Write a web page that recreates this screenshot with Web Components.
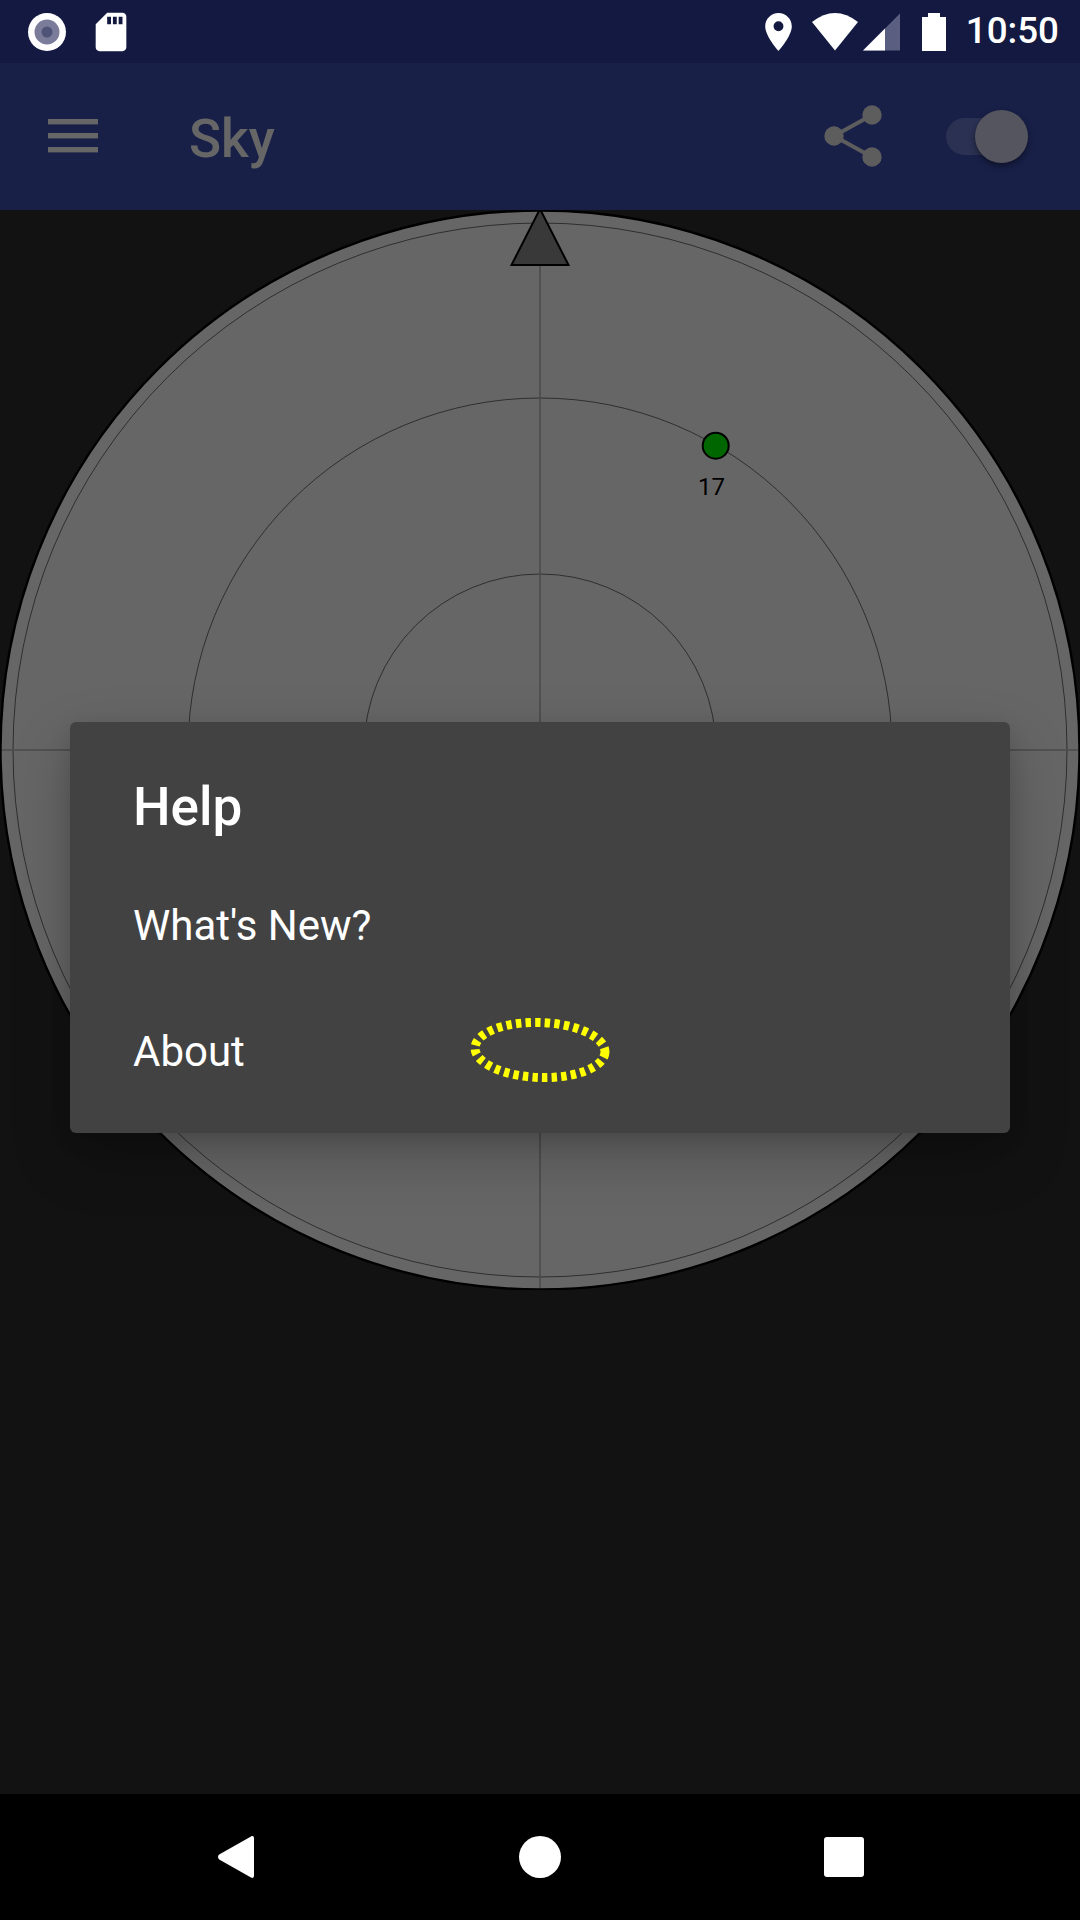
<!DOCTYPE html>
<html>
<head>
<meta charset="utf-8">
<title>Sky</title>
<style>
  html, body { margin: 0; padding: 0; background: #000; }
  body { width: 1080px; height: 1920px; overflow: hidden; font-family: Roboto, "Liberation Sans", sans-serif; }
</style>
</head>
<body>
<app-screen>
  <status-bar slot="status" time="10:50"></status-bar>
  <app-toolbar slot="toolbar" heading="Sky"></app-toolbar>
  <sky-view slot="content"></sky-view>
  <help-dialog slot="dialog" heading="Help">
    <menu-row>What's New?</menu-row>
    <menu-row>About</menu-row>
  </help-dialog>
  <nav-bar slot="nav"></nav-bar>
</app-screen>

<script>
  class AppScreen extends HTMLElement {
    constructor() {
      super();
      this.attachShadow({ mode: 'open' });
      this.shadowRoot.innerHTML = `
        <style>
          :host { display: flex; flex-direction: column; width: 1080px; height: 1920px; }
          .main { position: relative; flex: 1; display: flex; flex-direction: column; min-height: 0; }
          .content { flex: 1; background: #2e2e2e; min-height: 0; }
          /* dim layer under the dialog */
          .scrim {
            position: absolute;
            inset: 0;
            background: rgba(0, 0, 0, 0.6);
            display: flex;
            align-items: center;
            justify-content: center;
          }
        </style>
        <slot name="status"></slot>
        <div class="main">
          <slot name="toolbar"></slot>
          <div class="content"><slot name="content"></slot></div>
          <div class="scrim"><slot name="dialog"></slot></div>
        </div>
        <slot name="nav"></slot>
      `;
    }
  }

  class StatusBar extends HTMLElement {
    constructor() {
      super();
      this.attachShadow({ mode: 'open' });
    }

    connectedCallback() {
      const time = this.getAttribute('time') || '';
      this.shadowRoot.innerHTML = `
        <style>
          :host {
            display: flex;
            align-items: center;
            height: 63px;
            background: #131940;
            color: #fff;
            font-size: 36.75px;
            font-weight: 500;
          }
          svg { display: block; flex: none; }
          .left { display: flex; margin-left: 28px; align-items: center; gap: 20px; }
          .sd { margin-left: 1.5px; }
          .right { margin-left: auto; display: flex; align-items: center; }
          .time { margin: 0 21px 0 20px; line-height: 63px; position: relative; top: -1px; }
        </style>
        <div class="left">
          <svg width="38" height="38" viewBox="0 0 38 38">
            <circle cx="19" cy="19" r="19" fill="#fff"/>
            <circle cx="19" cy="19" r="12.5" fill="#7a7c9a"/>
            <circle cx="19" cy="19" r="5.5" fill="#4e5377"/>
          </svg>
          <svg class="sd" width="46" height="46" viewBox="0 0 24 24" fill="#fff">
            <path d="M18 2h-8L4.02 8 4 20c0 1.1.9 2 2 2h12c1.1 0 2-.9 2-2V4c0-1.1-.9-2-2-2zm-6 6h-2V4h2v4zm3 0h-2V4h2v4zm3 0h-2V4h2v4z"/>
          </svg>
        </div>
        <div class="right">
          <svg width="27" height="38" viewBox="0 0 14 20" fill="#fff">
            <path fill-rule="evenodd" d="M7 0C3.13 0 0 3.13 0 7c0 5.25 7 13 7 13s7-7.75 7-13c0-3.87-3.13-7-7-7zm0 9.6a2.6 2.6 0 1 1 0-5.2 2.6 2.6 0 0 1 0 5.2z"/>
          </svg>
          <svg style="margin-left:20px" width="46" height="38" viewBox="0 0 46 38" fill="#fff">
            <path d="M23 37.5L0 9Q23 -9 46 9Z"/>
          </svg>
          <svg style="margin-left:5px" width="37" height="38" viewBox="0 0 37 38">
            <path d="M0 37.5L37 .5V37.5Z" fill="#5a5e80"/>
            <path d="M0 37.5L22 15.5V37.5Z" fill="#fff"/>
          </svg>
          <svg style="margin-left:22px" width="24" height="38" viewBox="0 0 24 38" fill="#fff">
            <path d="M6 0h12v4h6v34H0V4h6z"/>
          </svg>
          <span class="time">${time}</span>
        </div>
      `;
    }
  }

  class AppToolbar extends HTMLElement {
    constructor() {
      super();
      this.attachShadow({ mode: 'open' });
    }

    connectedCallback() {
      const heading = this.getAttribute('heading') || '';
      this.shadowRoot.innerHTML = `
        <style>
          :host {
            display: flex;
            align-items: center;
            height: 147px;
            background: #3c50b4;
            color: #fff;
            flex: none;
          }
          svg { display: block; flex: none; }
          .menu { margin-left: 48px; position: relative; top: -1px; }
          h1 {
            margin: 0 0 0 91px;
            font-size: 53px;
            font-weight: 500;
            line-height: 62px;
            position: relative;
            top: 2px;
          }
          .share { margin-left: auto; position: relative; top: -1px; }
          .switch { position: relative; width: 82px; height: 37px; margin: 0 52px 0 56px; }
          .track { position: absolute; inset: 0; border-radius: 19px; background: #6b7acd; }
          .thumb {
            position: absolute;
            right: 0;
            top: -8px;
            width: 53px;
            height: 53px;
            border-radius: 50%;
            background: #d2d4eb;
            box-shadow: 0 3px 6px rgba(0, 0, 0, 0.45);
          }
        </style>
        <svg class="menu" width="50" height="34" viewBox="0 0 50 34" fill="#fff">
          <rect y="0" width="50" height="5.4"/>
          <rect y="14" width="50" height="5.4"/>
          <rect y="28" width="50" height="5.4"/>
        </svg>
        <h1>${heading}</h1>
        <svg class="share" width="74" height="74" viewBox="0 0 74 74" fill="#e8e8ec" stroke="#e8e8ec">
          <path d="M56 16L18 37L56 58" fill="none" stroke-width="4"/>
          <circle cx="56" cy="16" r="9.7" stroke="none"/>
          <circle cx="18" cy="37" r="9.7" stroke="none"/>
          <circle cx="56" cy="58" r="9.7" stroke="none"/>
        </svg>
        <div class="switch"><div class="track"></div><div class="thumb"></div></div>
      `;
    }
  }

  class SkyView extends HTMLElement {
    constructor() {
      super();
      this.attachShadow({ mode: 'open' });
      this.shadowRoot.innerHTML = `
        <style>
          :host { display: block; width: 1080px; height: 1080px; }
          svg { display: block; }
          text { font-family: Roboto, "Liberation Sans", sans-serif; font-size: 24px; }
        </style>
        <svg width="1080" height="1080" viewBox="0 0 1080 1080">
          <circle cx="540" cy="540" r="539.5" fill="#fff"/>
          <circle cx="540" cy="540" r="527" fill="none" stroke="#000" stroke-opacity="0.55" stroke-width="1"/>
          <circle cx="540" cy="540" r="352" fill="none" stroke="#000" stroke-opacity="0.55" stroke-width="1"/>
          <circle cx="540" cy="540" r="176" fill="none" stroke="#000" stroke-opacity="0.55" stroke-width="1"/>
          <path d="M540 0V1080M0 540H1080" stroke="#bbb" stroke-width="1.6" fill="none"/>
          <circle cx="540" cy="540" r="539.5" fill="none" stroke="#000" stroke-width="2.4"/>
          <path d="M540 -1L511.5 55H568.5Z" fill="#909090" stroke="#000" stroke-width="2"/>
          <circle cx="715.7" cy="235.7" r="13" fill="#0f0" stroke="#000" stroke-width="2"/>
          <text x="698" y="285">17</text>
        </svg>
      `;
    }
  }

  class HelpDialog extends HTMLElement {
    constructor() {
      super();
      this.attachShadow({ mode: 'open' });
    }

    connectedCallback() {
      const heading = this.getAttribute('heading') || '';
      this.shadowRoot.innerHTML = `
        <style>
          :host {
            display: block;
            position: relative;
            width: 940px;
            box-sizing: border-box;
            margin-top: -2px;
            padding: 50px 64px 18px 63px;
            background: #424242;
            border-radius: 6px;
            color: #fff;
            box-shadow: 0 24px 60px rgba(0, 0, 0, 0.22), 0 8px 20px rgba(0, 0, 0, 0.12);
          }
          h2 { margin: 0 0 21px; font-size: 53px; font-weight: 500; line-height: 70px; }
          /* focus ring, sits over the dialog */
          svg { position: absolute; left: 390px; top: 286px; }
        </style>
        <h2>${heading}</h2>
        <slot></slot>
        <svg width="160" height="84" viewBox="0 0 160 84">
          <ellipse cx="80" cy="42" rx="65" ry="27.5" transform="rotate(2 80 42)" fill="none" stroke="#ff0" stroke-width="9" stroke-dasharray="5.4 4.2"/>
        </svg>
      `;
    }
  }

  class MenuRow extends HTMLElement {
    constructor() {
      super();
      this.attachShadow({ mode: 'open' });
      this.shadowRoot.innerHTML = `
        <style>
          :host { display: block; font-size: 42px; line-height: 126px; height: 126px; }
        </style>
        <slot></slot>
      `;
    }
  }

  class NavBar extends HTMLElement {
    constructor() {
      super();
      this.attachShadow({ mode: 'open' });
      this.shadowRoot.innerHTML = `
        <style>
          :host {
            display: flex;
            align-items: center;
            height: 126px;
            flex: none;
            padding-left: 218px;
            background: #000;
          }
          svg { display: block; flex: none; }
          .home { margin-left: 265px; }
          .recent { margin-left: 263px; }
        </style>
        <svg width="36" height="42" viewBox="0 0 36 42" fill="#fff">
          <path d="M33 .6c1.6-1.2 3 0 3 1.6v37.6c0 1.6-1.4 2.8-3 1.6L1.2 23.4c-1.6-1.2-1.6-3.6 0-4.8z"/>
        </svg>
        <svg class="home" width="42" height="42" viewBox="0 0 42 42" fill="#fff"><circle cx="21" cy="21" r="21"/></svg>
        <svg class="recent" width="40" height="40" viewBox="0 0 40 40" fill="#fff"><rect width="40" height="40" rx="3"/></svg>
      `;
    }
  }

  customElements.define('app-screen', AppScreen);
  customElements.define('status-bar', StatusBar);
  customElements.define('app-toolbar', AppToolbar);
  customElements.define('sky-view', SkyView);
  customElements.define('help-dialog', HelpDialog);
  customElements.define('menu-row', MenuRow);
  customElements.define('nav-bar', NavBar);
</script>
</body>
</html>
